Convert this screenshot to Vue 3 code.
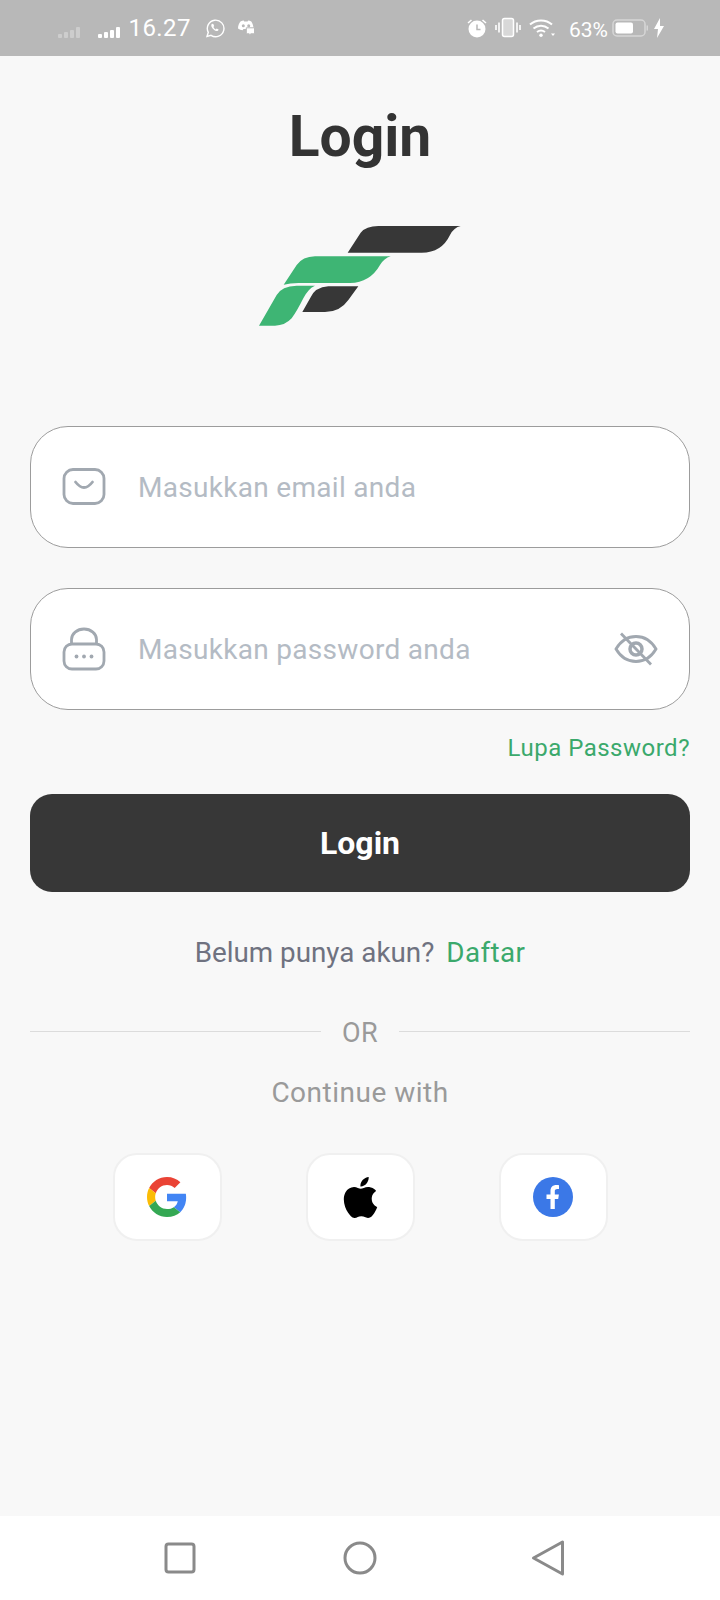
<template>
  <div class="screen">
    <div class="status-bar">
      <div class="status-left">
        <svg class="signal dim" width="24" height="12" viewBox="0 0 24 12"><rect x="0" y="8" width="4" height="4" rx="1" /><rect x="6" y="6" width="4" height="6" rx="1" /><rect x="12" y="4" width="4" height="8" rx="1" /><rect x="18" y="1" width="4" height="11" rx="1" /></svg>
        <svg class="signal" width="24" height="12" viewBox="0 0 24 12"><rect x="0" y="8" width="4" height="4" rx="1" /><rect x="6" y="6" width="4" height="6" rx="1" /><rect x="12" y="4" width="4" height="8" rx="1" /><rect x="18" y="1" width="4" height="11" rx="1" /></svg>
        <span class="clock">16.27</span>
        <svg class="whatsapp" width="20" height="20" viewBox="0 0 20 20" fill="none" stroke="#fff" stroke-width="1.4">
          <path d="M2 18.500l1.300-4.200A8.300 8.300 0 1 1 6 17.300z" />
          <path d="M7 5.800c-1 .9-1 2.200 0 3.800 1 1.600 2.400 2.900 4 3.400 1.300.3 2.300-.3 2.600-1.500l-2-1-.9.9c-1-.5-1.800-1.300-2.300-2.400l.8-.9-.9-2.200z" fill="#fff" stroke="none" />
        </svg>
        <svg class="discord" width="18" height="16" viewBox="0 0 18 16">
          <path d="M3.500 1.500C5 .8 6 .5 6.700.5l.5 1h3.400l.5-1c1 .1 2.200.5 3.200 1 1.500 2.200 2.200 4.500 2.200 7-1.200.9-2.500 1.500-3.800 1.800l-.9-1.300H6.500l-.9 1.300C4 10 2.500 9.500 1 8.500c0-2.600.9-5 2.500-7z" fill="#fff" />
          <circle cx="6.300" cy="5.800" r="1.500" fill="#b8b8b8" />
          <circle cx="11.700" cy="5.800" r="1.500" fill="#b8b8b8" />
          <path d="M9.300 7.800h8.200v6h-3.800l-1.500 1.700v-1.700H9.300z" fill="#fff" stroke="#b8b8b8" stroke-width="1" />
        </svg>
      </div>
      <div class="status-right">
        <svg width="22" height="22" viewBox="0 0 22 22">
          <circle cx="11" cy="12" r="8.500" fill="#fff" />
          <path d="M11 7.500V12.500H14.500" fill="none" stroke="#b8b8b8" stroke-width="1.500" />
          <path d="M2 6l3.500-3M20 6l-3.500-3" stroke="#fff" stroke-width="1.600" fill="none" />
        </svg>
        <svg class="vibrate" width="26" height="22" viewBox="0 0 26 22" fill="none" stroke="#fff">
          <rect x="7.500" y="1.500" width="11" height="18" rx="2" stroke-width="1.500" fill="#d8d8d8" />
          <path d="M4 5.500v10M1 8v5M22 5.500v10M25 8v5" stroke-width="1.600" />
        </svg>
        <svg class="wifi" width="26" height="20" viewBox="0 0 26 20" fill="none" stroke="#fff" stroke-width="2">
          <path d="M1 6.500C7 1 17 1 23 6.500M4.500 10.500c4.500-3.800 10.500-3.800 15 0M8 14c2.500-1.800 5.500-1.800 8 0" />
          <circle cx="12" cy="17.300" r="1.700" fill="#fff" stroke="none" />
          <path d="M22 15.500h4l-2 2.500z" fill="#fff" stroke="none" />
        </svg>
        <span class="percent">63%</span>
        <svg class="battery" width="36" height="18" viewBox="0 0 36 18">
          <rect x="1" y="1" width="32" height="16" rx="4" fill="none" stroke="#d6d6d6" stroke-width="1.500" />
          <rect x="3.500" y="3.500" width="17.500" height="11" rx="2" fill="#fff" />
          <rect x="34.500" y="6.500" width="1.500" height="5" fill="#d6d6d6" />
        </svg>
        <svg class="bolt" width="12" height="20" viewBox="0 0 12 20"><path d="M7 0L1 11h4l-1 9 7-12H7z" fill="#fff" /></svg>
      </div>
    </div>

    <main class="content">
      <h1 class="title">Login</h1>

      <svg class="logo" width="240" height="130" viewBox="0 0 720 390">
        <path d="M323 128L362 68Q378 48 415 48L662 48Q642 52 630 75Q605 128 545 128Z" fill="#373737" />
        <path d="M131 224L170 165Q188 140 225 139L452 139Q432 145 420 165Q390 218 330 219L175 219Q150 219 131 224Z" fill="#3eb574" />
        <path d="M57 347L110 255Q125 228 170 227L225 227Q205 235 190 265Q170 305 155 325Q135 347 105 347Z" fill="#3eb574" />
        <path d="M187 306L212 262Q225 232 265 229L355 229L325 270Q300 306 255 306Z" fill="#373737" />
      </svg>

      <div class="field">
        <svg class="field-icon" width="44" height="38" viewBox="0 0 44 38" fill="none" stroke="#a1a8b0" stroke-width="2.800">
          <rect x="2" y="1.500" width="40" height="34" rx="9" />
          <path d="M13.500 14Q22 25 30.500 14" stroke-linecap="round" />
        </svg>
        <span class="placeholder">Masukkan email anda</span>
      </div>

      <div class="field second">
        <svg class="field-icon" width="44" height="44" viewBox="0 0 44 44" fill="none" stroke="#a1a8b0" stroke-width="2.800">
          <rect x="2" y="17" width="40" height="25" rx="8" />
          <path d="M9.500 17v-4.500a12.500 10.500 0 0 1 25 0v4.500" />
          <g fill="#a1a8b0" stroke="none"><circle cx="14.500" cy="29.500" r="1.900" /><circle cx="22" cy="29.500" r="1.900" /><circle cx="29.500" cy="29.500" r="1.900" /></g>
        </svg>
        <span class="placeholder">Masukkan password anda</span>
        <svg class="eye" width="44" height="34" viewBox="0 0 44 34" fill="none" stroke="#a1a8b0" stroke-width="2.800">
          <path d="M2 17C7 8.500 14 4.500 22 4.500S37 8.500 42 17C37 25.500 30 29.500 22 29.500S7 25.500 2 17z" />
          <circle cx="22" cy="17" r="6" stroke-width="3.500" />
          <path d="M7 1.500l30 31" />
        </svg>
      </div>

      <a class="forgot">Lupa Password?</a>

      <button class="btn-login">Login</button>

      <p class="register">Belum punya akun? <span class="register-link">Daftar</span></p>

      <div class="divider">
        <span class="line"></span>
        <span class="or">OR</span>
        <span class="line"></span>
      </div>

      <p class="continue">Continue with</p>

      <div class="socials">
        <button class="social">
          <svg width="40" height="40" viewBox="0 0 48 48">
            <path fill="#EA4335" d="M24 9.500c3.540 0 6.710 1.220 9.210 3.600l6.850-6.850C35.900 2.380 30.470 0 24 0 14.620 0 6.510 5.380 2.560 13.220l7.980 6.190C12.430 13.720 17.740 9.500 24 9.500z" />
            <path fill="#4285F4" d="M46.980 24.550c0-1.570-.15-3.090-.38-4.550H24v9.020h12.940c-.58 2.960-2.260 5.480-4.780 7.180l7.730 6c4.510-4.180 7.090-10.360 7.090-17.650z" />
            <path fill="#FBBC05" d="M10.530 28.590c-.48-1.450-.76-2.990-.76-4.590s.27-3.140.76-4.590l-7.980-6.190C.92 16.460 0 20.120 0 24c0 3.880.92 7.540 2.560 10.780l7.970-6.190z" />
            <path fill="#34A853" d="M24 48c6.480 0 11.930-2.130 15.890-5.810l-7.730-6c-2.150 1.450-4.920 2.300-8.160 2.300-6.260 0-11.570-4.220-13.470-9.910l-7.980 6.190C6.510 42.620 14.620 48 24 48z" />
          </svg>
        </button>
        <button class="social">
          <svg width="41" height="41" viewBox="0 0 24 24">
            <path fill="#000" d="M12.152 6.896c-.948 0-2.415-1.078-3.960-1.040-2.040.027-3.910 1.183-4.961 3.014-2.117 3.675-.546 9.103 1.519 12.090 1.013 1.454 2.208 3.090 3.792 3.039 1.520-.065 2.090-.987 3.935-.987 1.831 0 2.350.987 3.960.948 1.637-.026 2.676-1.480 3.676-2.948 1.156-1.688 1.636-3.325 1.662-3.415-.039-.013-3.182-1.221-3.220-4.857-.026-3.040 2.480-4.494 2.597-4.559-1.429-2.090-3.623-2.324-4.390-2.376-2-.156-3.675 1.090-4.610 1.090zM15.530 3.830c.843-1.012 1.400-2.427 1.245-3.830-1.207.052-2.662.805-3.532 1.818-.780.896-1.454 2.338-1.273 3.714 1.338.104 2.715-.688 3.559-1.701" />
          </svg>
        </button>
        <button class="social">
          <svg width="40" height="40" viewBox="0 0 40 40">
            <circle cx="20" cy="20" r="20" fill="#3b78e7" />
            <path fill="#fff" d="M17.500 32V22h-4v-4.500h4V14c0-4 2.400-6 5.800-6 1.400 0 2.700.2 2.700.2v3.900h-1.800c-1.900 0-2.400 1-2.400 2.200v3.200h4.100l-.7 4.500h-3.400v10z" />
          </svg>
        </button>
      </div>
    </main>

    <nav class="nav-bar">
      <svg width="32" height="32" viewBox="0 0 32 32"><rect x="2" y="2" width="28" height="28" rx="2.500" fill="none" stroke="#8a8a8a" stroke-width="3" /></svg>
      <svg width="36" height="36" viewBox="0 0 36 36"><circle cx="18" cy="18" r="15" fill="none" stroke="#8a8a8a" stroke-width="3" /></svg>
      <svg class="nav-back" width="34" height="38" viewBox="0 0 34 38"><path d="M2.500 19L31.500 3V35z" fill="none" stroke="#8a8a8a" stroke-width="3" stroke-linejoin="round" /></svg>
    </nav>
  </div>
</template>

<script setup>
</script>

<style>
html,
body {
  margin: 0;
  background: #f8f8f8;
}
</style>

<style scoped>
.screen {
  width: 720px;
  height: 1600px;
  display: flex;
  flex-direction: column;
  background: #f8f8f8;
  font-family: Roboto, "Liberation Sans", sans-serif;
  overflow: hidden;
}

.status-bar {
  height: 56px;
  flex-shrink: 0;
  background: #b8b8b8;
  display: flex;
  justify-content: space-between;
  align-items: center;
  padding: 0 55px 0 58px;
  box-sizing: border-box;
  color: #fff;
}

.status-left,
.status-right {
  display: flex;
  align-items: center;
}

.signal {
  fill: #fff;
  margin-right: 16px;
  margin-top: 8px;
}

.signal.dim {
  opacity: 0.3;
}

.clock {
  font-size: 24px;
  letter-spacing: 0.4px;
  margin-left: -9.5px;
}

.whatsapp {
  margin-left: 14.5px;
}

.discord {
  margin-left: 12px;
}

.vibrate {
  margin-left: 7px;
}

.wifi {
  margin-left: 8px;
}

.percent {
  font-size: 21px;
  margin-left: 14px;
  width: 36px;
  margin-top: 4px;
}

.battery {
  margin-left: 7px;
}

.bolt {
  margin-left: 5px;
}

.content {
  flex: 1;
  display: flex;
  flex-direction: column;
  padding: 0 30px;
}

.title {
  margin: 48px 0 0;
  font-size: 57px;
  line-height: 66px;
  font-weight: 700;
  color: #333;
  text-align: center;
}

.logo {
  align-self: center;
  margin-top: 40px;
}

.field {
  height: 122px;
  box-sizing: border-box;
  margin-top: 86px;
  border: 1px solid #9c9c9c;
  border-radius: 38px;
  background: #fff;
  display: flex;
  align-items: center;
  padding: 0 31px;
}

.field.second {
  margin-top: 40px;
}

.field-icon {
  flex-shrink: 0;
}

.placeholder {
  margin-left: 32px;
  font-size: 28px;
  letter-spacing: 0.3px;
  color: #b4bbc4;
  flex: 1;
}

.forgot {
  align-self: flex-end;
  margin-top: 24px;
  font-size: 24px;
  line-height: 28px;
  letter-spacing: 0.5px;
  color: #3ba96c;
}

.btn-login {
  height: 98px;
  margin-top: 32px;
  border: none;
  border-radius: 22px;
  background: #373737;
  color: #fff;
  font-family: inherit;
  font-size: 32px;
  font-weight: 700;
}

.register {
  margin: 44px 0 0;
  font-size: 27.8px;
  line-height: 34px;
  text-align: center;
  color: #6f7280;
}

.register-link {
  margin-left: 5px;
  color: #3ba96c;
  letter-spacing: 0.4px;
}

.divider {
  display: flex;
  align-items: center;
  margin-top: 44px;
}

.line {
  flex: 1;
  height: 1px;
  background: #dcdcdc;
}

.or {
  width: 78px;
  padding-top: 3px;
  text-align: center;
  font-size: 27px;
  line-height: 32px;
  letter-spacing: 0.3px;
  color: #9a9a9a;
}

.continue {
  margin: 27px 0 0;
  font-size: 28px;
  line-height: 34px;
  letter-spacing: 0.5px;
  text-align: center;
  color: #9a9a9a;
}

.socials {
  display: flex;
  justify-content: center;
  gap: 84px;
  margin-top: 43px;
}

.social {
  width: 109px;
  height: 88px;
  box-sizing: border-box;
  padding: 0;
  display: flex;
  align-items: center;
  justify-content: center;
  border: 2px solid #f0f0f0;
  border-radius: 24px;
  background: #fff;
}

.nav-bar {
  height: 84px;
  flex-shrink: 0;
  background: #fff;
  display: flex;
  align-items: center;
  padding-left: 164px;
  gap: 146px;
}

.nav-back {
  margin-left: 7px;
}
</style>
